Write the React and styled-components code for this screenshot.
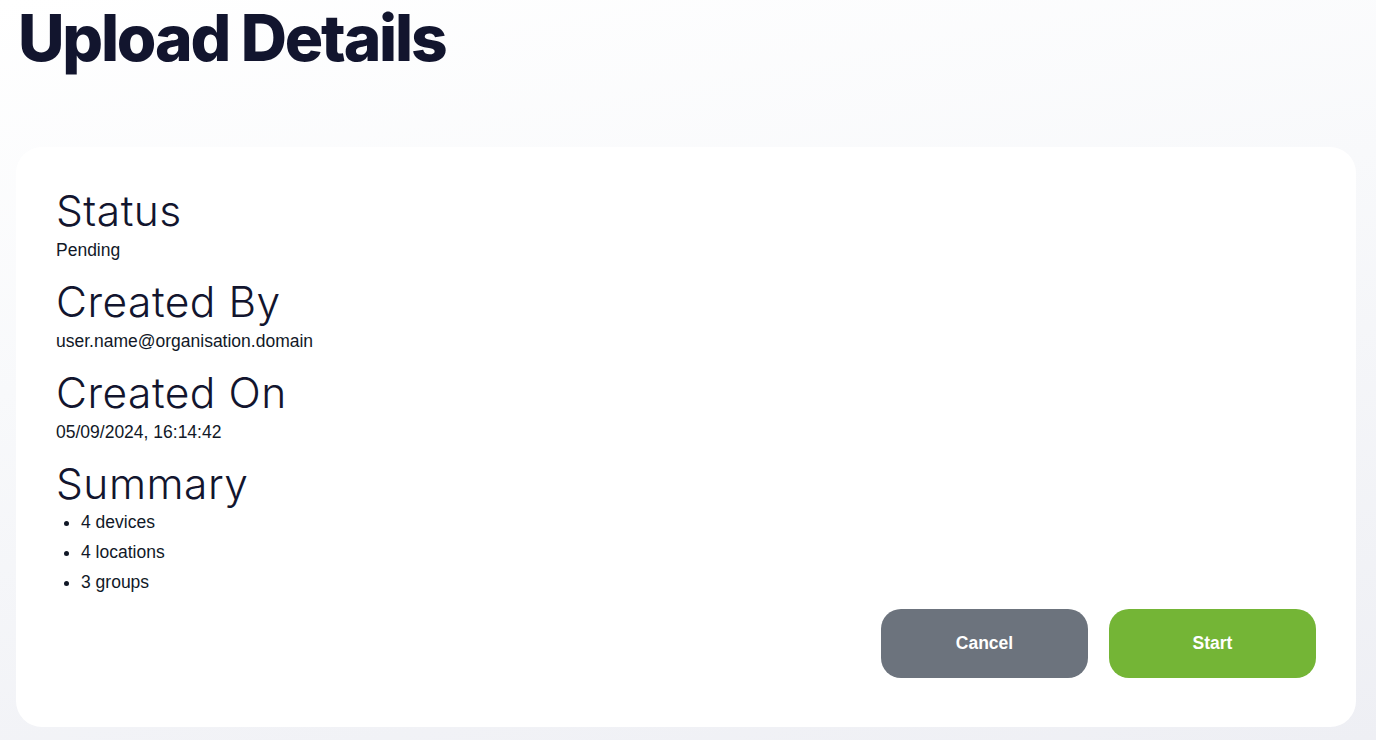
import React from "react";
import styled, { createGlobalStyle } from "styled-components";

const Global = createGlobalStyle`
  html, body { margin: 0; padding: 0; }
  body {
    min-height: 740px;
    background: linear-gradient(170deg, #ffffff 0%, #f8f9fb 40%, #eeeff4 100%);
    font-family: "Liberation Sans", Arial, sans-serif;
    color: #111827;
  }
`;

const Page = styled.main`
  padding: 0 20px 13px 16px;
  display: flex;
  flex-direction: column;
`;

const Title = styled.h1`
  font-family: Inter, "Noto Sans", sans-serif;
  font-weight: 800;
  font-size: 64px;
  letter-spacing: -2.2px;
  line-height: 76px;
  margin: 0;
  padding: 0 8px 0 2px;
  color: #12152e;
  height: 147px;
  box-sizing: border-box;
`;

const Card = styled.section`
  background: #ffffff;
  border-radius: 26px;
  padding: 40px 40px 49px;
  display: flex;
  flex-direction: column;
`;

const Details = styled.div`
  display: flex;
  flex-direction: column;
  gap: 16px;
`;

const Field = styled.div`
  display: flex;
  flex-direction: column;
`;

const Label = styled.h2`
  font-family: Inter, "Open Sans", sans-serif;
  font-weight: 300;
  font-size: 42.5px;
  line-height: 48px;
  letter-spacing: 0.5px;
  margin: 0;
  color: #12152e;
`;

const Value = styled.div`
  font-size: 17.5px;
  line-height: 24px;
  padding-top: 3px;
`;

const List = styled.ul`
  margin: -1px 0 0;
  padding-left: 25px;
`;

const Item = styled.li`
  font-size: 17.5px;
  line-height: 30px;
`;

const Actions = styled.div`
  display: flex;
  justify-content: flex-end;
  gap: 21px;
  margin-top: 12px;
`;

const Button = styled.button`
  width: 207px;
  height: 69px;
  border: none;
  border-radius: 20px;
  background: ${(p) => (p.$variant === "primary" ? "#74b536" : "#6c737d")};
  color: #ffffff;
  font-family: "Liberation Sans", Arial, sans-serif;
  font-weight: 700;
  font-size: 17.5px;
  cursor: pointer;
`;

const fields = [
  { label: "Status", value: "Pending" },
  { label: "Created By", value: "user.name@organisation.domain" },
  { label: "Created On", value: "05/09/2024, 16:14:42" },
];

export default function App() {
  return (
    <>
      <Global />
      <Page>
        <Title>Upload Details</Title>
        <Card>
          <Details>
            {fields.map((f) => (
              <Field key={f.label}>
                <Label>{f.label}</Label>
                <Value>{f.value}</Value>
              </Field>
            ))}
            <Field>
              <Label>Summary</Label>
              <List>
                <Item>4 devices</Item>
                <Item>4 locations</Item>
                <Item>3 groups</Item>
              </List>
            </Field>
          </Details>
          <Actions>
            <Button>Cancel</Button>
            <Button $variant="primary">Start</Button>
          </Actions>
        </Card>
      </Page>
    </>
  );
}
